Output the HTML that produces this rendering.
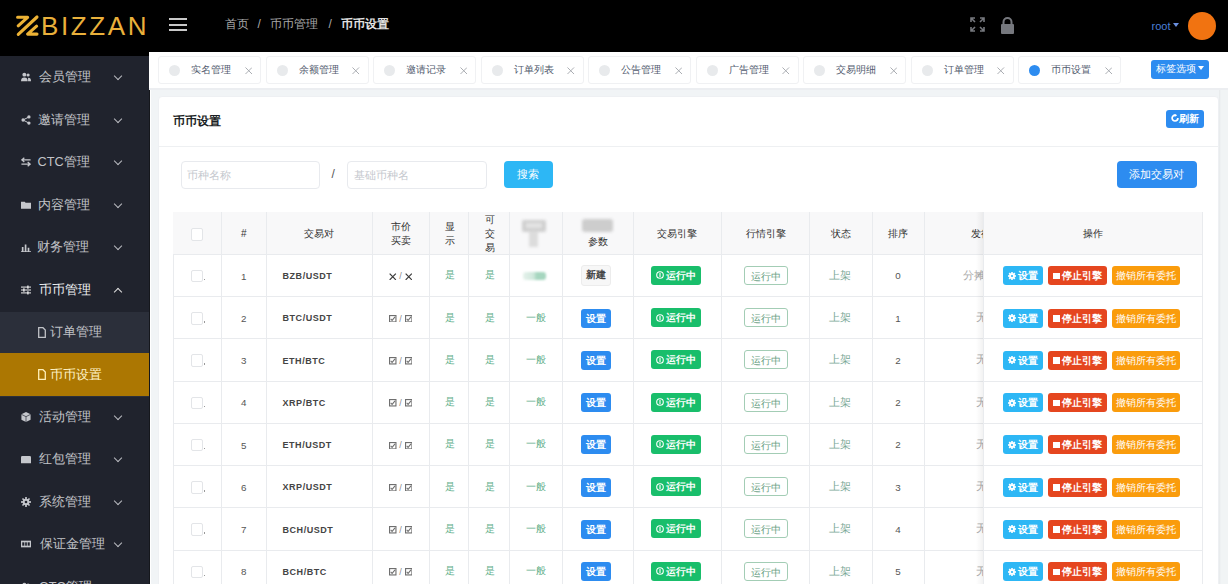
<!DOCTYPE html><html><head><meta charset="utf-8"><style>
*{margin:0;padding:0;box-sizing:border-box}
html,body{width:1228px;height:584px;overflow:hidden;background:#f1f4f6;font-family:"Liberation Sans",sans-serif;position:relative}
.abs{position:absolute}
#hdr{left:0;top:0;width:1228px;height:52px;background:#000}
#logoArea{left:0;top:0;width:150px;height:56px;background:#000}
#side{left:0;top:56px;width:150px;height:528px;background:#20232d}
#sideedge{left:149px;top:52px;width:1px;height:532px;background:#15171c}
#whiteedge{left:150px;top:52px;width:1.2px;height:532px;background:#fff}
.mi{position:absolute;left:0;width:150px;height:42.5px;color:#c5c6ca;font-size:12.7px;line-height:42.5px}
.mi .t{position:absolute;left:39px;top:0}
.mi .chev{position:absolute;left:114.5px;top:17px;width:6px;height:6px;border-right:1.3px solid #b9bbc0;border-bottom:1.3px solid #b9bbc0;transform:rotate(45deg)}
.mi .chev.up{top:20px;transform:rotate(-135deg)}
.mi .ic{position:absolute;left:21px;top:16px;width:10px;height:10px}
#sub{left:0;top:311.5px;width:150px;height:85px;background:#2b2f3a}
#act{left:0;top:353px;width:150px;height:42.5px;background:#ac7702}
#tabbar{left:149px;top:52px;width:1079px;height:36px;background:#fff}
#tabline{left:149px;top:88px;width:1079px;height:2px;background:#eceef1}
.tab{position:absolute;top:56px;height:28px;width:103px;background:#fff;border:1px solid #f0f1f3;border-radius:3px;font-size:10.2px;color:#515a6e;line-height:26px}
.tab .dot{position:absolute;left:10px;top:7.5px;width:11px;height:11px;border-radius:50%;background:#e8eaec}
.tab .dot.on{background:#2d8cf0}
.tab .tt{position:absolute;left:32px;top:0}
.tab .x{position:absolute;left:86px;top:0;color:#9aa0a6;font-size:11px}
#card{left:158px;top:96px;width:1061px;height:500px;background:#fff;border:1px solid #eef0f3;border-radius:4px}
#cardline{left:159px;top:145.5px;width:1059px;height:1px;background:#eef0f2}
.inp{position:absolute;height:28px;border:1px solid #e8eaee;border-radius:4px;background:#fff;font-size:10.5px;color:#c5c8ce;line-height:26px;padding-left:5.7px}
.btn{position:absolute;color:#fff;text-align:center;border-radius:3px}
table{border-collapse:collapse;table-layout:fixed}
.cell{position:absolute;border-right:1px solid #e9ebee;border-bottom:1px solid #e9ebee;text-align:center;color:#515a6e;font-size:10.5px;display:flex;align-items:center;justify-content:center}
.th{background:#f8f8f9;font-weight:500;color:#333;line-height:14px;font-size:10px;padding-top:2px}
.cb{width:12px;height:12.5px;border:1px solid #e3e5e8;border-radius:2px;background:#fff;margin-left:-1px;margin-top:1.5px}
.green{color:#5faf8a;font-size:10px}
.tag{display:inline-block;height:19px;line-height:19px;border-radius:3px;font-size:10.5px}
</style></head><body>
<div class="abs" id="hdr"></div><div class="abs" id="logoArea"></div>
<svg class="abs" style="left:12px;top:10px" width="32" height="32" viewBox="12 10 32 32">
<g fill="none" stroke="#ecb235" stroke-width="3.1" stroke-linecap="round" stroke-linejoin="round">
<path d="M17.6 17.3 H27.6 L18.2 25.8"/>
<path d="M37 17 L18.3 34.4"/>
<path d="M36.6 26.2 L27.6 34.1 H37"/>
</g></svg>
<div class="abs" style="left:41px;top:12px;font-size:26px;color:#e9b03b;letter-spacing:2.6px;line-height:28px">BIZZAN</div>
<div class="abs" style="left:168.5px;top:18px;width:18.5px;height:2px;background:#c9c9c9"></div>
<div class="abs" style="left:168.5px;top:23.5px;width:18.5px;height:2px;background:#c9c9c9"></div>
<div class="abs" style="left:168.5px;top:29px;width:18.5px;height:2px;background:#c9c9c9"></div>
<div class="abs" style="left:224.5px;top:16px;font-size:12px;color:#a9a9a9;line-height:16px;white-space:nowrap">首页</div>
<div class="abs" style="left:257.5px;top:16px;font-size:12px;color:#a9a9a9;line-height:16px">/</div>
<div class="abs" style="left:270px;top:16px;font-size:12px;color:#a9a9a9;line-height:16px;white-space:nowrap">币币管理</div>
<div class="abs" style="left:328.5px;top:16px;font-size:12px;color:#a9a9a9;line-height:16px">/</div>
<div class="abs" style="left:340.5px;top:16px;font-size:12px;color:#e3e3e3;font-weight:bold;line-height:16px;white-space:nowrap">币币设置</div>
<svg class="abs" style="left:970px;top:17px" width="15" height="15" viewBox="0 0 15 15" fill="none" stroke="#76787e" stroke-width="1.6">
<path d="M1 5V1H5M1 1L5 5M10 1H14V5M14 1L10 5M1 10V14H5M1 14L5 10M14 10V14H10M14 14L10 10"/></svg>
<svg class="abs" style="left:1000px;top:17px" width="15" height="17" viewBox="0 0 15 17">
<path d="M3.5 7V5A4 4 0 0 1 11.5 5V7" fill="none" stroke="#76787e" stroke-width="2"/>
<rect x="1" y="7" width="13" height="10" rx="1" fill="#76787e"/></svg>
<div class="abs" style="left:1151.5px;top:18px;font-size:11px;color:#4a7fd6;line-height:16px">root</div>
<div class="abs" style="left:1172.5px;top:23px;width:0;height:0;border-left:3.5px solid transparent;border-right:3.5px solid transparent;border-top:4px solid #6a8fe0"></div>
<div class="abs" style="left:1187.5px;top:11.5px;width:28.5px;height:28.5px;border-radius:50%;background:#f17311"></div>
<div class="abs" id="side"></div><div class="abs" id="sub"></div><div class="abs" id="act"></div>
<div class="mi" style="top:56px;color:#c2c3c8"><svg class="ic" viewBox="0 0 12 12"><circle cx="4" cy="3.2" r="2.3" fill="#c5c7cc"/><path d="M0 11C0 7.5 1.5 6.5 4 6.5S8 7.5 8 11Z" fill="#c5c7cc"/><circle cx="8.5" cy="3.6" r="1.9" fill="#c5c7cc"/><path d="M8.5 11H12C12 8 11 7 8.5 7Z" fill="#c5c7cc"/></svg><span class="t" style="left:39px">会员管理</span><span class="chev"></span></div>
<div class="mi" style="top:98.5px;color:#c2c3c8"><svg class="ic" viewBox="0 0 12 12"><circle cx="9.5" cy="2.3" r="2" fill="#c5c7cc"/><circle cx="2.5" cy="6" r="2" fill="#c5c7cc"/><circle cx="9.5" cy="9.7" r="2" fill="#c5c7cc"/><path d="M9.5 2.3L2.5 6L9.5 9.7" stroke="#c5c7cc" stroke-width="1.2" fill="none"/></svg><span class="t" style="left:37.5px">邀请管理</span><span class="chev"></span></div>
<div class="mi" style="top:141px;color:#c2c3c8"><svg class="ic" viewBox="0 0 12 12"><path d="M1 3.5H11.5M4 1L1 3.5L4 6M0.5 8.5H11M8 6L11 8.5L8 11" stroke="#c5c7cc" stroke-width="1.5" fill="none"/></svg><span class="t" style="left:37.5px">CTC管理</span><span class="chev"></span></div>
<div class="mi" style="top:183.5px;color:#c2c3c8"><svg class="ic" viewBox="0 0 12 12"><path d="M0 2H4.5L5.5 3.3H12V10.5H0Z" fill="#c5c7cc"/></svg><span class="t" style="left:37.5px">内容管理</span><span class="chev"></span></div>
<div class="mi" style="top:226px;color:#c2c3c8"><svg class="ic" viewBox="0 0 12 12"><path d="M0 11H12V12H0ZM1 6H3V11H1ZM4.5 3H6.5V11H4.5ZM8 7H10V11H8Z" fill="#c5c7cc"/></svg><span class="t" style="left:36.5px">财务管理</span><span class="chev"></span></div>
<div class="mi" style="top:268.5px;color:#eeeff1"><svg class="ic" viewBox="0 0 12 12"><path d="M0 2.5H12M0 6H12M0 9.5H12" stroke="#f0f0f0" stroke-width="1.2" fill="none"/><path d="M7.6 0.5H9V4.5H7.6ZM2.8 4H4.2V8H2.8ZM7.6 7.5H9V11.5H7.6Z" fill="#fff"/></svg><span class="t" style="left:39px">币币管理</span><span class="chev up" style="border-color:#e0e0e0"></span></div>
<div class="mi" style="top:395.5px;color:#c2c3c8"><svg class="ic" viewBox="0 0 12 12"><path d="M6 0L11.5 2.8V9.2L6 12L0.5 9.2V2.8Z" fill="#c5c7cc"/><path d="M0.5 2.8L6 5.6L11.5 2.8M6 5.6V12" stroke="#20232d" stroke-width="0.8" fill="none"/></svg><span class="t" style="left:39px">活动管理</span><span class="chev"></span></div>
<div class="mi" style="top:438px;color:#c2c3c8"><svg class="ic" viewBox="0 0 12 12"><path d="M1.5 2.5H10.5Q12 2.5 12 4V11H0V4Q0 2.5 1.5 2.5Z" fill="#c5c7cc"/></svg><span class="t" style="left:39px">红包管理</span><span class="chev"></span></div>
<div class="mi" style="top:480.5px;color:#c2c3c8"><svg class="ic" viewBox="0 0 12 12"><g fill="#c5c7cc"><circle cx="6" cy="6" r="4"/><rect x="5" y="0" width="2" height="12"/><rect x="0" y="5" width="12" height="2"/><rect x="5" y="0" width="2" height="12" transform="rotate(45 6 6)"/><rect x="5" y="0" width="2" height="12" transform="rotate(-45 6 6)"/></g><circle cx="6" cy="6" r="1.6" fill="#20232d"/></svg><span class="t" style="left:39px">系统管理</span><span class="chev"></span></div>
<div class="mi" style="top:523px;color:#c2c3c8"><svg class="ic" viewBox="0 0 12 12"><rect x="0" y="2" width="12" height="8" fill="#c5c7cc"/><rect x="1.5" y="4" width="2.5" height="4" fill="#20232d"/><rect x="5" y="4" width="2" height="4" fill="#20232d"/><rect x="8" y="4" width="2.5" height="4" fill="#20232d"/></svg><span class="t" style="left:40px">保证金管理</span><span class="chev"></span></div>
<div class="mi" style="top:565.5px;color:#c2c3c8"><svg class="ic" viewBox="0 0 12 12"><circle cx="4" cy="3.2" r="2.3" fill="#c5c7cc"/><path d="M0 11C0 7.5 1.5 6.5 4 6.5S8 7.5 8 11Z" fill="#c5c7cc"/><circle cx="8.5" cy="3.6" r="1.9" fill="#c5c7cc"/><path d="M8.5 11H12C12 8 11 7 8.5 7Z" fill="#c5c7cc"/></svg><span class="t" style="left:39px">OTC管理</span><span class="chev"></span></div>
<div class="mi" style="top:311px;color:#c0c2c7"><svg class="abs" style="left:37.5px;top:15.5px" width="8" height="11" viewBox="0 0 8 11"><path d="M0.7 0.7H5L7.3 3V10.3H0.7Z" fill="none" stroke="#c0c2c7" stroke-width="1.3"/></svg><span class="t" style="left:50px">订单管理</span></div>
<div class="mi" style="top:353.5px;color:#fff3c8"><svg class="abs" style="left:37.5px;top:15.5px" width="8" height="11" viewBox="0 0 8 11"><path d="M0.7 0.7H5L7.3 3V10.3H0.7Z" fill="none" stroke="#fff0b8" stroke-width="1.3"/></svg><span class="t" style="left:50px">币币设置</span></div>
<div class="abs" id="sideedge"></div><div class="abs" id="whiteedge"></div>
<div class="abs" id="tabbar"></div><div class="abs" id="tabline"></div>
<div class="tab" style="left:158.4px"><span class="dot"></span><span class="tt">实名管理</span><svg class="x" style="left:85.5px;top:10px" width="7.5" height="7.5" viewBox="0 0 8 8"><path d="M0.5 0.5L7.5 7.5M7.5 0.5L0.5 7.5" stroke="#a5a9ae" stroke-width="1"/></svg></div>
<div class="tab" style="left:265.9px"><span class="dot"></span><span class="tt">余额管理</span><svg class="x" style="left:85.5px;top:10px" width="7.5" height="7.5" viewBox="0 0 8 8"><path d="M0.5 0.5L7.5 7.5M7.5 0.5L0.5 7.5" stroke="#a5a9ae" stroke-width="1"/></svg></div>
<div class="tab" style="left:373.3px"><span class="dot"></span><span class="tt">邀请记录</span><svg class="x" style="left:85.5px;top:10px" width="7.5" height="7.5" viewBox="0 0 8 8"><path d="M0.5 0.5L7.5 7.5M7.5 0.5L0.5 7.5" stroke="#a5a9ae" stroke-width="1"/></svg></div>
<div class="tab" style="left:480.8px"><span class="dot"></span><span class="tt">订单列表</span><svg class="x" style="left:85.5px;top:10px" width="7.5" height="7.5" viewBox="0 0 8 8"><path d="M0.5 0.5L7.5 7.5M7.5 0.5L0.5 7.5" stroke="#a5a9ae" stroke-width="1"/></svg></div>
<div class="tab" style="left:588.2px"><span class="dot"></span><span class="tt">公告管理</span><svg class="x" style="left:85.5px;top:10px" width="7.5" height="7.5" viewBox="0 0 8 8"><path d="M0.5 0.5L7.5 7.5M7.5 0.5L0.5 7.5" stroke="#a5a9ae" stroke-width="1"/></svg></div>
<div class="tab" style="left:695.6px"><span class="dot"></span><span class="tt">广告管理</span><svg class="x" style="left:85.5px;top:10px" width="7.5" height="7.5" viewBox="0 0 8 8"><path d="M0.5 0.5L7.5 7.5M7.5 0.5L0.5 7.5" stroke="#a5a9ae" stroke-width="1"/></svg></div>
<div class="tab" style="left:803.1px"><span class="dot"></span><span class="tt">交易明细</span><svg class="x" style="left:85.5px;top:10px" width="7.5" height="7.5" viewBox="0 0 8 8"><path d="M0.5 0.5L7.5 7.5M7.5 0.5L0.5 7.5" stroke="#a5a9ae" stroke-width="1"/></svg></div>
<div class="tab" style="left:910.5px"><span class="dot"></span><span class="tt">订单管理</span><svg class="x" style="left:85.5px;top:10px" width="7.5" height="7.5" viewBox="0 0 8 8"><path d="M0.5 0.5L7.5 7.5M7.5 0.5L0.5 7.5" stroke="#a5a9ae" stroke-width="1"/></svg></div>
<div class="tab" style="left:1018.0px"><span class="dot on"></span><span class="tt">币币设置</span><svg class="x" style="left:85.5px;top:10px" width="7.5" height="7.5" viewBox="0 0 8 8"><path d="M0.5 0.5L7.5 7.5M7.5 0.5L0.5 7.5" stroke="#a5a9ae" stroke-width="1"/></svg></div>
<div class="btn" style="left:1151px;top:60px;width:58px;height:18.5px;background:#2d8cf0;font-size:9.6px;line-height:18.5px;border-radius:3px">标签选项<span style="display:inline-block;margin-left:2px;vertical-align:2px;border-left:3px solid transparent;border-right:3px solid transparent;border-top:4px solid #fff"></span></div>
<div class="abs" id="card"></div><div class="abs" id="cardline"></div>
<div class="abs" style="left:173.3px;top:112.5px;font-size:12.1px;font-weight:bold;color:#1c1f26;line-height:17px">币币设置</div>
<div class="btn" style="left:1166px;top:109.5px;width:38px;height:18.5px;background:#2d8cf0;font-size:9.8px;line-height:18.5px;font-weight:bold"><svg width="8" height="8" viewBox="0 0 8 8" style="display:inline-block;vertical-align:-0.5px;margin-right:0.5px"><path d="M4 1.2A2.9 2.9 0 1 0 6.9 4.1" fill="none" stroke="#fff" stroke-width="1.7"/><path d="M3.6 -0.4L6.2 1.3L3.6 3Z" fill="#fff"/></svg>刷新</div>
<div class="inp" style="left:180.5px;top:160.5px;width:139px">币种名称</div>
<div class="abs" style="left:331.5px;top:166px;font-size:12px;color:#555;line-height:16px">/</div>
<div class="inp" style="left:347px;top:160.5px;width:139.5px">基础币种名</div>
<div class="btn" style="left:503.5px;top:160.5px;width:49px;height:27.5px;background:#2db7f5;font-size:11px;line-height:27.5px;border-radius:4px">搜索</div>
<div class="btn" style="left:1116.5px;top:161px;width:80.5px;height:26.5px;background:#2d8cf0;font-size:10.6px;line-height:26.5px;border-radius:4px">添加交易对</div>
<div class="abs" style="left:173.2px;top:211.8px;width:1030.0px;height:1px;background:#e9ebee"></div>
<div class="abs" style="left:173.2px;top:211.8px;width:1px;height:372.2px;background:#e9ebee"></div>
<div class="cell th" style="left:173.2px;top:211.8px;width:48.80000000000001px;height:43px;"><span class="cb"></span></div>
<div class="cell th" style="left:222px;top:211.8px;width:44.5px;height:43px;">#</div>
<div class="cell th" style="left:266.5px;top:211.8px;width:106.0px;height:43px;">交易对</div>
<div class="cell th" style="left:372.5px;top:211.8px;width:57.0px;height:43px;line-height:13.6px;">市价<br>买卖</div>
<div class="cell th" style="left:429.5px;top:211.8px;width:39.5px;height:43px;line-height:13.6px;padding-left:3px;">显<br>示</div>
<div class="cell th" style="left:469px;top:211.8px;width:40.5px;height:43px;line-height:13.8px;padding-left:3px;">可<br>交<br>易</div>
<div class="cell th" style="left:509.5px;top:211.8px;width:53.0px;height:43px;"><span style="display:inline-block;position:relative;width:26px;height:30px;filter:blur(1.8px);margin-top:2px;margin-left:-4px"><span style="position:absolute;left:1px;top:0;width:24px;height:12px;background:#cfcfcf;border-radius:2px"></span><span style="position:absolute;left:5px;top:3px;width:16px;height:5px;background:#e3e3e3"></span><span style="position:absolute;left:8px;top:11px;width:9px;height:16px;background:#dcdcdc"></span></span></div>
<div class="cell th" style="left:562.5px;top:211.8px;width:71.0px;height:43px;"><span style="display:block"><span style="display:block;width:31px;height:13px;margin:0 auto 3px;background:#cdcdcd;border-radius:3px;filter:blur(1.8px)"></span>参数</span></div>
<div class="cell th" style="left:633.5px;top:211.8px;width:88.5px;height:43px;">交易引擎</div>
<div class="cell th" style="left:722px;top:211.8px;width:88px;height:43px;">行情引擎</div>
<div class="cell th" style="left:810px;top:211.8px;width:62.5px;height:43px;">状态</div>
<div class="cell th" style="left:872.5px;top:211.8px;width:52.200000000000045px;height:43px;">排序</div>
<div class="cell th" style="left:924.7px;top:211.8px;width:114.59999999999991px;height:43px;">发行</div>
<div class="cell" style="left:173.2px;top:254.8px;width:48.80000000000001px;height:42.25px;"><span class="cb"></span><span style="position:absolute;left:30.5px;top:24px;width:1.5px;height:1.5px;background:#999"></span></div>
<div class="cell" style="left:222px;top:254.8px;width:44.5px;height:42.25px;"><span style="color:#555;font-size:9.8px;margin-top:1.5px">1</span></div>
<div class="cell" style="left:266.5px;top:254.8px;width:106.0px;height:42.25px;justify-content:flex-start;padding-left:16px;"><b style="font-size:9px;letter-spacing:0.55px;color:#444;margin-top:1.5px">BZB/USDT</b></div>
<div class="cell" style="left:372.5px;top:254.8px;width:57.0px;height:42.25px;"><span style="margin-top:2px;display:flex;align-items:center"><svg width="7.5" height="7.5" viewBox="0 0 8 8" style="display:inline-block"><path d="M0.7 0.7L7.3 7.3M7.3 0.7L0.7 7.3" stroke="#3a3a3a" stroke-width="1.3"/></svg><span style="display:inline-block;width:8px;text-align:center;font-size:9px;color:#888">/</span><svg width="7.5" height="7.5" viewBox="0 0 8 8" style="display:inline-block"><path d="M0.7 0.7L7.3 7.3M7.3 0.7L0.7 7.3" stroke="#3a3a3a" stroke-width="1.3"/></svg></span></div>
<div class="cell" style="left:429.5px;top:254.8px;width:39.5px;height:42.25px;"><span class="green" style="margin-left:3px">是</span></div>
<div class="cell" style="left:469px;top:254.8px;width:40.5px;height:42.25px;"><span class="green" style="margin-left:3px">是</span></div>
<div class="cell" style="left:509.5px;top:254.8px;width:53.0px;height:42.25px;"><span style="display:inline-block;width:23px;height:8.5px;background:linear-gradient(to right,#e6f2ec,#cfe8dc 45%,#a6d6bf 60%,#a6d6bf);border-radius:3px;filter:blur(1.1px);margin-left:-3px;margin-top:1px"></span></div>
<div class="cell" style="left:562.5px;top:254.8px;width:71.0px;height:42.25px;"><span class="tag" style="background:#f7f7f7;border:1px solid #ececec;color:#444;width:30px;height:20.5px;line-height:18.5px;margin-left:-4px;font-weight:bold;font-size:10px">新建</span></div>
<div class="cell" style="left:633.5px;top:254.8px;width:88.5px;height:42.25px;"><span class="tag" style="background:#19be6b;color:#fff;width:50px;margin-left:-3px;font-weight:bold;font-size:9.8px"><svg width="8" height="8" viewBox="0 0 8 8" style="display:inline-block;vertical-align:-0.5px;margin-right:1.5px"><circle cx="4" cy="4" r="3.3" fill="none" stroke="#fff" stroke-width="1.1"/><rect x="3.45" y="2" width="1.1" height="4" fill="#fff"/></svg>运行中</span></div>
<div class="cell" style="left:722px;top:254.8px;width:88px;height:42.25px;"><span class="tag" style="border:1px solid #a3cdb5;color:#6b9f84;width:44.5px;margin-left:1px;font-size:10px">运行中</span></div>
<div class="cell" style="left:810px;top:254.8px;width:62.5px;height:42.25px;"><span style="color:#79a896;margin-left:-1px;margin-top:1px">上架</span></div>
<div class="cell" style="left:872.5px;top:254.8px;width:52.200000000000045px;height:42.25px;"><span style="color:#555;font-size:9.8px;margin-top:1px">0</span></div>
<div class="cell" style="left:924.7px;top:254.8px;width:114.59999999999991px;height:42.25px;"><span style="color:#aaa;position:absolute;top:14px;left:38.8px">分摊(平台)</span></div>
<div class="cell" style="left:173.2px;top:297.05px;width:48.80000000000001px;height:42.25px;"><span class="cb"></span><span style="position:absolute;left:30.5px;top:24px;width:1.5px;height:1.5px;background:#999"></span></div>
<div class="cell" style="left:222px;top:297.05px;width:44.5px;height:42.25px;"><span style="color:#555;font-size:9.8px;margin-top:1.5px">2</span></div>
<div class="cell" style="left:266.5px;top:297.05px;width:106.0px;height:42.25px;justify-content:flex-start;padding-left:16px;"><b style="font-size:9px;letter-spacing:0.55px;color:#444;margin-top:1.5px">BTC/USDT</b></div>
<div class="cell" style="left:372.5px;top:297.05px;width:57.0px;height:42.25px;"><span style="margin-top:2px;display:flex;align-items:center"><svg width="7.5" height="7.5" viewBox="0 0 8 8" style="display:inline-block"><rect x="0.6" y="0.6" width="6.8" height="6.8" fill="none" stroke="#6f6f6f" stroke-width="1.2"/><path d="M1.8 4.2L3.3 5.8L6.4 2" fill="none" stroke="#6f6f6f" stroke-width="1.1"/></svg><span style="display:inline-block;width:8px;text-align:center;font-size:9px;color:#888">/</span><svg width="7.5" height="7.5" viewBox="0 0 8 8" style="display:inline-block"><rect x="0.6" y="0.6" width="6.8" height="6.8" fill="none" stroke="#6f6f6f" stroke-width="1.2"/><path d="M1.8 4.2L3.3 5.8L6.4 2" fill="none" stroke="#6f6f6f" stroke-width="1.1"/></svg></span></div>
<div class="cell" style="left:429.5px;top:297.05px;width:39.5px;height:42.25px;"><span class="green" style="margin-left:3px">是</span></div>
<div class="cell" style="left:469px;top:297.05px;width:40.5px;height:42.25px;"><span class="green" style="margin-left:3px">是</span></div>
<div class="cell" style="left:509.5px;top:297.05px;width:53.0px;height:42.25px;"><span class="green">一般</span></div>
<div class="cell" style="left:562.5px;top:297.05px;width:71.0px;height:42.25px;"><span class="tag" style="background:#2d8cf0;color:#fff;width:30px;margin-left:-3.5px;margin-top:1px;font-weight:bold;font-size:9.8px">设置</span></div>
<div class="cell" style="left:633.5px;top:297.05px;width:88.5px;height:42.25px;"><span class="tag" style="background:#19be6b;color:#fff;width:50px;margin-left:-3px;font-weight:bold;font-size:9.8px"><svg width="8" height="8" viewBox="0 0 8 8" style="display:inline-block;vertical-align:-0.5px;margin-right:1.5px"><circle cx="4" cy="4" r="3.3" fill="none" stroke="#fff" stroke-width="1.1"/><rect x="3.45" y="2" width="1.1" height="4" fill="#fff"/></svg>运行中</span></div>
<div class="cell" style="left:722px;top:297.05px;width:88px;height:42.25px;"><span class="tag" style="border:1px solid #a3cdb5;color:#6b9f84;width:44.5px;margin-left:1px;font-size:10px">运行中</span></div>
<div class="cell" style="left:810px;top:297.05px;width:62.5px;height:42.25px;"><span style="color:#79a896;margin-left:-1px;margin-top:1px">上架</span></div>
<div class="cell" style="left:872.5px;top:297.05px;width:52.200000000000045px;height:42.25px;"><span style="color:#555;font-size:9.8px;margin-top:1px">1</span></div>
<div class="cell" style="left:924.7px;top:297.05px;width:114.59999999999991px;height:42.25px;"><span style="color:#aaa;position:absolute;top:14px;left:51.5px">无</span></div>
<div class="cell" style="left:173.2px;top:339.3px;width:48.80000000000001px;height:42.25px;"><span class="cb"></span><span style="position:absolute;left:30.5px;top:24px;width:1.5px;height:1.5px;background:#999"></span></div>
<div class="cell" style="left:222px;top:339.3px;width:44.5px;height:42.25px;"><span style="color:#555;font-size:9.8px;margin-top:1.5px">3</span></div>
<div class="cell" style="left:266.5px;top:339.3px;width:106.0px;height:42.25px;justify-content:flex-start;padding-left:16px;"><b style="font-size:9px;letter-spacing:0.55px;color:#444;margin-top:1.5px">ETH/BTC</b></div>
<div class="cell" style="left:372.5px;top:339.3px;width:57.0px;height:42.25px;"><span style="margin-top:2px;display:flex;align-items:center"><svg width="7.5" height="7.5" viewBox="0 0 8 8" style="display:inline-block"><rect x="0.6" y="0.6" width="6.8" height="6.8" fill="none" stroke="#6f6f6f" stroke-width="1.2"/><path d="M1.8 4.2L3.3 5.8L6.4 2" fill="none" stroke="#6f6f6f" stroke-width="1.1"/></svg><span style="display:inline-block;width:8px;text-align:center;font-size:9px;color:#888">/</span><svg width="7.5" height="7.5" viewBox="0 0 8 8" style="display:inline-block"><rect x="0.6" y="0.6" width="6.8" height="6.8" fill="none" stroke="#6f6f6f" stroke-width="1.2"/><path d="M1.8 4.2L3.3 5.8L6.4 2" fill="none" stroke="#6f6f6f" stroke-width="1.1"/></svg></span></div>
<div class="cell" style="left:429.5px;top:339.3px;width:39.5px;height:42.25px;"><span class="green" style="margin-left:3px">是</span></div>
<div class="cell" style="left:469px;top:339.3px;width:40.5px;height:42.25px;"><span class="green" style="margin-left:3px">是</span></div>
<div class="cell" style="left:509.5px;top:339.3px;width:53.0px;height:42.25px;"><span class="green">一般</span></div>
<div class="cell" style="left:562.5px;top:339.3px;width:71.0px;height:42.25px;"><span class="tag" style="background:#2d8cf0;color:#fff;width:30px;margin-left:-3.5px;margin-top:1px;font-weight:bold;font-size:9.8px">设置</span></div>
<div class="cell" style="left:633.5px;top:339.3px;width:88.5px;height:42.25px;"><span class="tag" style="background:#19be6b;color:#fff;width:50px;margin-left:-3px;font-weight:bold;font-size:9.8px"><svg width="8" height="8" viewBox="0 0 8 8" style="display:inline-block;vertical-align:-0.5px;margin-right:1.5px"><circle cx="4" cy="4" r="3.3" fill="none" stroke="#fff" stroke-width="1.1"/><rect x="3.45" y="2" width="1.1" height="4" fill="#fff"/></svg>运行中</span></div>
<div class="cell" style="left:722px;top:339.3px;width:88px;height:42.25px;"><span class="tag" style="border:1px solid #a3cdb5;color:#6b9f84;width:44.5px;margin-left:1px;font-size:10px">运行中</span></div>
<div class="cell" style="left:810px;top:339.3px;width:62.5px;height:42.25px;"><span style="color:#79a896;margin-left:-1px;margin-top:1px">上架</span></div>
<div class="cell" style="left:872.5px;top:339.3px;width:52.200000000000045px;height:42.25px;"><span style="color:#555;font-size:9.8px;margin-top:1px">2</span></div>
<div class="cell" style="left:924.7px;top:339.3px;width:114.59999999999991px;height:42.25px;"><span style="color:#aaa;position:absolute;top:14px;left:51.5px">无</span></div>
<div class="cell" style="left:173.2px;top:381.55px;width:48.80000000000001px;height:42.25px;"><span class="cb"></span><span style="position:absolute;left:30.5px;top:24px;width:1.5px;height:1.5px;background:#999"></span></div>
<div class="cell" style="left:222px;top:381.55px;width:44.5px;height:42.25px;"><span style="color:#555;font-size:9.8px;margin-top:1.5px">4</span></div>
<div class="cell" style="left:266.5px;top:381.55px;width:106.0px;height:42.25px;justify-content:flex-start;padding-left:16px;"><b style="font-size:9px;letter-spacing:0.55px;color:#444;margin-top:1.5px">XRP/BTC</b></div>
<div class="cell" style="left:372.5px;top:381.55px;width:57.0px;height:42.25px;"><span style="margin-top:2px;display:flex;align-items:center"><svg width="7.5" height="7.5" viewBox="0 0 8 8" style="display:inline-block"><rect x="0.6" y="0.6" width="6.8" height="6.8" fill="none" stroke="#6f6f6f" stroke-width="1.2"/><path d="M1.8 4.2L3.3 5.8L6.4 2" fill="none" stroke="#6f6f6f" stroke-width="1.1"/></svg><span style="display:inline-block;width:8px;text-align:center;font-size:9px;color:#888">/</span><svg width="7.5" height="7.5" viewBox="0 0 8 8" style="display:inline-block"><rect x="0.6" y="0.6" width="6.8" height="6.8" fill="none" stroke="#6f6f6f" stroke-width="1.2"/><path d="M1.8 4.2L3.3 5.8L6.4 2" fill="none" stroke="#6f6f6f" stroke-width="1.1"/></svg></span></div>
<div class="cell" style="left:429.5px;top:381.55px;width:39.5px;height:42.25px;"><span class="green" style="margin-left:3px">是</span></div>
<div class="cell" style="left:469px;top:381.55px;width:40.5px;height:42.25px;"><span class="green" style="margin-left:3px">是</span></div>
<div class="cell" style="left:509.5px;top:381.55px;width:53.0px;height:42.25px;"><span class="green">一般</span></div>
<div class="cell" style="left:562.5px;top:381.55px;width:71.0px;height:42.25px;"><span class="tag" style="background:#2d8cf0;color:#fff;width:30px;margin-left:-3.5px;margin-top:1px;font-weight:bold;font-size:9.8px">设置</span></div>
<div class="cell" style="left:633.5px;top:381.55px;width:88.5px;height:42.25px;"><span class="tag" style="background:#19be6b;color:#fff;width:50px;margin-left:-3px;font-weight:bold;font-size:9.8px"><svg width="8" height="8" viewBox="0 0 8 8" style="display:inline-block;vertical-align:-0.5px;margin-right:1.5px"><circle cx="4" cy="4" r="3.3" fill="none" stroke="#fff" stroke-width="1.1"/><rect x="3.45" y="2" width="1.1" height="4" fill="#fff"/></svg>运行中</span></div>
<div class="cell" style="left:722px;top:381.55px;width:88px;height:42.25px;"><span class="tag" style="border:1px solid #a3cdb5;color:#6b9f84;width:44.5px;margin-left:1px;font-size:10px">运行中</span></div>
<div class="cell" style="left:810px;top:381.55px;width:62.5px;height:42.25px;"><span style="color:#79a896;margin-left:-1px;margin-top:1px">上架</span></div>
<div class="cell" style="left:872.5px;top:381.55px;width:52.200000000000045px;height:42.25px;"><span style="color:#555;font-size:9.8px;margin-top:1px">2</span></div>
<div class="cell" style="left:924.7px;top:381.55px;width:114.59999999999991px;height:42.25px;"><span style="color:#aaa;position:absolute;top:14px;left:51.5px">无</span></div>
<div class="cell" style="left:173.2px;top:423.8px;width:48.80000000000001px;height:42.25px;"><span class="cb"></span><span style="position:absolute;left:30.5px;top:24px;width:1.5px;height:1.5px;background:#999"></span></div>
<div class="cell" style="left:222px;top:423.8px;width:44.5px;height:42.25px;"><span style="color:#555;font-size:9.8px;margin-top:1.5px">5</span></div>
<div class="cell" style="left:266.5px;top:423.8px;width:106.0px;height:42.25px;justify-content:flex-start;padding-left:16px;"><b style="font-size:9px;letter-spacing:0.55px;color:#444;margin-top:1.5px">ETH/USDT</b></div>
<div class="cell" style="left:372.5px;top:423.8px;width:57.0px;height:42.25px;"><span style="margin-top:2px;display:flex;align-items:center"><svg width="7.5" height="7.5" viewBox="0 0 8 8" style="display:inline-block"><rect x="0.6" y="0.6" width="6.8" height="6.8" fill="none" stroke="#6f6f6f" stroke-width="1.2"/><path d="M1.8 4.2L3.3 5.8L6.4 2" fill="none" stroke="#6f6f6f" stroke-width="1.1"/></svg><span style="display:inline-block;width:8px;text-align:center;font-size:9px;color:#888">/</span><svg width="7.5" height="7.5" viewBox="0 0 8 8" style="display:inline-block"><rect x="0.6" y="0.6" width="6.8" height="6.8" fill="none" stroke="#6f6f6f" stroke-width="1.2"/><path d="M1.8 4.2L3.3 5.8L6.4 2" fill="none" stroke="#6f6f6f" stroke-width="1.1"/></svg></span></div>
<div class="cell" style="left:429.5px;top:423.8px;width:39.5px;height:42.25px;"><span class="green" style="margin-left:3px">是</span></div>
<div class="cell" style="left:469px;top:423.8px;width:40.5px;height:42.25px;"><span class="green" style="margin-left:3px">是</span></div>
<div class="cell" style="left:509.5px;top:423.8px;width:53.0px;height:42.25px;"><span class="green">一般</span></div>
<div class="cell" style="left:562.5px;top:423.8px;width:71.0px;height:42.25px;"><span class="tag" style="background:#2d8cf0;color:#fff;width:30px;margin-left:-3.5px;margin-top:1px;font-weight:bold;font-size:9.8px">设置</span></div>
<div class="cell" style="left:633.5px;top:423.8px;width:88.5px;height:42.25px;"><span class="tag" style="background:#19be6b;color:#fff;width:50px;margin-left:-3px;font-weight:bold;font-size:9.8px"><svg width="8" height="8" viewBox="0 0 8 8" style="display:inline-block;vertical-align:-0.5px;margin-right:1.5px"><circle cx="4" cy="4" r="3.3" fill="none" stroke="#fff" stroke-width="1.1"/><rect x="3.45" y="2" width="1.1" height="4" fill="#fff"/></svg>运行中</span></div>
<div class="cell" style="left:722px;top:423.8px;width:88px;height:42.25px;"><span class="tag" style="border:1px solid #a3cdb5;color:#6b9f84;width:44.5px;margin-left:1px;font-size:10px">运行中</span></div>
<div class="cell" style="left:810px;top:423.8px;width:62.5px;height:42.25px;"><span style="color:#79a896;margin-left:-1px;margin-top:1px">上架</span></div>
<div class="cell" style="left:872.5px;top:423.8px;width:52.200000000000045px;height:42.25px;"><span style="color:#555;font-size:9.8px;margin-top:1px">2</span></div>
<div class="cell" style="left:924.7px;top:423.8px;width:114.59999999999991px;height:42.25px;"><span style="color:#aaa;position:absolute;top:14px;left:51.5px">无</span></div>
<div class="cell" style="left:173.2px;top:466.05px;width:48.80000000000001px;height:42.25px;"><span class="cb"></span><span style="position:absolute;left:30.5px;top:24px;width:1.5px;height:1.5px;background:#999"></span></div>
<div class="cell" style="left:222px;top:466.05px;width:44.5px;height:42.25px;"><span style="color:#555;font-size:9.8px;margin-top:1.5px">6</span></div>
<div class="cell" style="left:266.5px;top:466.05px;width:106.0px;height:42.25px;justify-content:flex-start;padding-left:16px;"><b style="font-size:9px;letter-spacing:0.55px;color:#444;margin-top:1.5px">XRP/USDT</b></div>
<div class="cell" style="left:372.5px;top:466.05px;width:57.0px;height:42.25px;"><span style="margin-top:2px;display:flex;align-items:center"><svg width="7.5" height="7.5" viewBox="0 0 8 8" style="display:inline-block"><rect x="0.6" y="0.6" width="6.8" height="6.8" fill="none" stroke="#6f6f6f" stroke-width="1.2"/><path d="M1.8 4.2L3.3 5.8L6.4 2" fill="none" stroke="#6f6f6f" stroke-width="1.1"/></svg><span style="display:inline-block;width:8px;text-align:center;font-size:9px;color:#888">/</span><svg width="7.5" height="7.5" viewBox="0 0 8 8" style="display:inline-block"><rect x="0.6" y="0.6" width="6.8" height="6.8" fill="none" stroke="#6f6f6f" stroke-width="1.2"/><path d="M1.8 4.2L3.3 5.8L6.4 2" fill="none" stroke="#6f6f6f" stroke-width="1.1"/></svg></span></div>
<div class="cell" style="left:429.5px;top:466.05px;width:39.5px;height:42.25px;"><span class="green" style="margin-left:3px">是</span></div>
<div class="cell" style="left:469px;top:466.05px;width:40.5px;height:42.25px;"><span class="green" style="margin-left:3px">是</span></div>
<div class="cell" style="left:509.5px;top:466.05px;width:53.0px;height:42.25px;"><span class="green">一般</span></div>
<div class="cell" style="left:562.5px;top:466.05px;width:71.0px;height:42.25px;"><span class="tag" style="background:#2d8cf0;color:#fff;width:30px;margin-left:-3.5px;margin-top:1px;font-weight:bold;font-size:9.8px">设置</span></div>
<div class="cell" style="left:633.5px;top:466.05px;width:88.5px;height:42.25px;"><span class="tag" style="background:#19be6b;color:#fff;width:50px;margin-left:-3px;font-weight:bold;font-size:9.8px"><svg width="8" height="8" viewBox="0 0 8 8" style="display:inline-block;vertical-align:-0.5px;margin-right:1.5px"><circle cx="4" cy="4" r="3.3" fill="none" stroke="#fff" stroke-width="1.1"/><rect x="3.45" y="2" width="1.1" height="4" fill="#fff"/></svg>运行中</span></div>
<div class="cell" style="left:722px;top:466.05px;width:88px;height:42.25px;"><span class="tag" style="border:1px solid #a3cdb5;color:#6b9f84;width:44.5px;margin-left:1px;font-size:10px">运行中</span></div>
<div class="cell" style="left:810px;top:466.05px;width:62.5px;height:42.25px;"><span style="color:#79a896;margin-left:-1px;margin-top:1px">上架</span></div>
<div class="cell" style="left:872.5px;top:466.05px;width:52.200000000000045px;height:42.25px;"><span style="color:#555;font-size:9.8px;margin-top:1px">3</span></div>
<div class="cell" style="left:924.7px;top:466.05px;width:114.59999999999991px;height:42.25px;"><span style="color:#aaa;position:absolute;top:14px;left:51.5px">无</span></div>
<div class="cell" style="left:173.2px;top:508.3px;width:48.80000000000001px;height:42.25px;"><span class="cb"></span><span style="position:absolute;left:30.5px;top:24px;width:1.5px;height:1.5px;background:#999"></span></div>
<div class="cell" style="left:222px;top:508.3px;width:44.5px;height:42.25px;"><span style="color:#555;font-size:9.8px;margin-top:1.5px">7</span></div>
<div class="cell" style="left:266.5px;top:508.3px;width:106.0px;height:42.25px;justify-content:flex-start;padding-left:16px;"><b style="font-size:9px;letter-spacing:0.55px;color:#444;margin-top:1.5px">BCH/USDT</b></div>
<div class="cell" style="left:372.5px;top:508.3px;width:57.0px;height:42.25px;"><span style="margin-top:2px;display:flex;align-items:center"><svg width="7.5" height="7.5" viewBox="0 0 8 8" style="display:inline-block"><rect x="0.6" y="0.6" width="6.8" height="6.8" fill="none" stroke="#6f6f6f" stroke-width="1.2"/><path d="M1.8 4.2L3.3 5.8L6.4 2" fill="none" stroke="#6f6f6f" stroke-width="1.1"/></svg><span style="display:inline-block;width:8px;text-align:center;font-size:9px;color:#888">/</span><svg width="7.5" height="7.5" viewBox="0 0 8 8" style="display:inline-block"><rect x="0.6" y="0.6" width="6.8" height="6.8" fill="none" stroke="#6f6f6f" stroke-width="1.2"/><path d="M1.8 4.2L3.3 5.8L6.4 2" fill="none" stroke="#6f6f6f" stroke-width="1.1"/></svg></span></div>
<div class="cell" style="left:429.5px;top:508.3px;width:39.5px;height:42.25px;"><span class="green" style="margin-left:3px">是</span></div>
<div class="cell" style="left:469px;top:508.3px;width:40.5px;height:42.25px;"><span class="green" style="margin-left:3px">是</span></div>
<div class="cell" style="left:509.5px;top:508.3px;width:53.0px;height:42.25px;"><span class="green">一般</span></div>
<div class="cell" style="left:562.5px;top:508.3px;width:71.0px;height:42.25px;"><span class="tag" style="background:#2d8cf0;color:#fff;width:30px;margin-left:-3.5px;margin-top:1px;font-weight:bold;font-size:9.8px">设置</span></div>
<div class="cell" style="left:633.5px;top:508.3px;width:88.5px;height:42.25px;"><span class="tag" style="background:#19be6b;color:#fff;width:50px;margin-left:-3px;font-weight:bold;font-size:9.8px"><svg width="8" height="8" viewBox="0 0 8 8" style="display:inline-block;vertical-align:-0.5px;margin-right:1.5px"><circle cx="4" cy="4" r="3.3" fill="none" stroke="#fff" stroke-width="1.1"/><rect x="3.45" y="2" width="1.1" height="4" fill="#fff"/></svg>运行中</span></div>
<div class="cell" style="left:722px;top:508.3px;width:88px;height:42.25px;"><span class="tag" style="border:1px solid #a3cdb5;color:#6b9f84;width:44.5px;margin-left:1px;font-size:10px">运行中</span></div>
<div class="cell" style="left:810px;top:508.3px;width:62.5px;height:42.25px;"><span style="color:#79a896;margin-left:-1px;margin-top:1px">上架</span></div>
<div class="cell" style="left:872.5px;top:508.3px;width:52.200000000000045px;height:42.25px;"><span style="color:#555;font-size:9.8px;margin-top:1px">4</span></div>
<div class="cell" style="left:924.7px;top:508.3px;width:114.59999999999991px;height:42.25px;"><span style="color:#aaa;position:absolute;top:14px;left:51.5px">无</span></div>
<div class="cell" style="left:173.2px;top:550.55px;width:48.80000000000001px;height:42.25px;"><span class="cb"></span><span style="position:absolute;left:30.5px;top:24px;width:1.5px;height:1.5px;background:#999"></span></div>
<div class="cell" style="left:222px;top:550.55px;width:44.5px;height:42.25px;"><span style="color:#555;font-size:9.8px;margin-top:1.5px">8</span></div>
<div class="cell" style="left:266.5px;top:550.55px;width:106.0px;height:42.25px;justify-content:flex-start;padding-left:16px;"><b style="font-size:9px;letter-spacing:0.55px;color:#444;margin-top:1.5px">BCH/BTC</b></div>
<div class="cell" style="left:372.5px;top:550.55px;width:57.0px;height:42.25px;"><span style="margin-top:2px;display:flex;align-items:center"><svg width="7.5" height="7.5" viewBox="0 0 8 8" style="display:inline-block"><rect x="0.6" y="0.6" width="6.8" height="6.8" fill="none" stroke="#6f6f6f" stroke-width="1.2"/><path d="M1.8 4.2L3.3 5.8L6.4 2" fill="none" stroke="#6f6f6f" stroke-width="1.1"/></svg><span style="display:inline-block;width:8px;text-align:center;font-size:9px;color:#888">/</span><svg width="7.5" height="7.5" viewBox="0 0 8 8" style="display:inline-block"><rect x="0.6" y="0.6" width="6.8" height="6.8" fill="none" stroke="#6f6f6f" stroke-width="1.2"/><path d="M1.8 4.2L3.3 5.8L6.4 2" fill="none" stroke="#6f6f6f" stroke-width="1.1"/></svg></span></div>
<div class="cell" style="left:429.5px;top:550.55px;width:39.5px;height:42.25px;"><span class="green" style="margin-left:3px">是</span></div>
<div class="cell" style="left:469px;top:550.55px;width:40.5px;height:42.25px;"><span class="green" style="margin-left:3px">是</span></div>
<div class="cell" style="left:509.5px;top:550.55px;width:53.0px;height:42.25px;"><span class="green">一般</span></div>
<div class="cell" style="left:562.5px;top:550.55px;width:71.0px;height:42.25px;"><span class="tag" style="background:#2d8cf0;color:#fff;width:30px;margin-left:-3.5px;margin-top:1px;font-weight:bold;font-size:9.8px">设置</span></div>
<div class="cell" style="left:633.5px;top:550.55px;width:88.5px;height:42.25px;"><span class="tag" style="background:#19be6b;color:#fff;width:50px;margin-left:-3px;font-weight:bold;font-size:9.8px"><svg width="8" height="8" viewBox="0 0 8 8" style="display:inline-block;vertical-align:-0.5px;margin-right:1.5px"><circle cx="4" cy="4" r="3.3" fill="none" stroke="#fff" stroke-width="1.1"/><rect x="3.45" y="2" width="1.1" height="4" fill="#fff"/></svg>运行中</span></div>
<div class="cell" style="left:722px;top:550.55px;width:88px;height:42.25px;"><span class="tag" style="border:1px solid #a3cdb5;color:#6b9f84;width:44.5px;margin-left:1px;font-size:10px">运行中</span></div>
<div class="cell" style="left:810px;top:550.55px;width:62.5px;height:42.25px;"><span style="color:#79a896;margin-left:-1px;margin-top:1px">上架</span></div>
<div class="cell" style="left:872.5px;top:550.55px;width:52.200000000000045px;height:42.25px;"><span style="color:#555;font-size:9.8px;margin-top:1px">5</span></div>
<div class="cell" style="left:924.7px;top:550.55px;width:114.59999999999991px;height:42.25px;"><span style="color:#aaa;position:absolute;top:14px;left:51.5px">无</span></div>
<div class="abs" style="left:975.9px;top:211.8px;width:7px;height:372.2px;background:linear-gradient(to right,rgba(0,0,0,0),rgba(0,0,0,0.05))"></div>
<div class="cell th" style="left:982.9px;top:211.8px;width:220.30000000000007px;height:43px;border-left:1px solid #e9ebee">操作</div>
<div class="cell" style="left:982.9px;top:254.8px;width:220.30000000000007px;height:42.25px;border-left:1px solid #e9ebee;justify-content:flex-start;background:#fff"><span class="tag abs" style="left:19.3px;top:11.7px;width:39.5px;background:#2db7f5;color:#fff;font-weight:bold;font-size:10px"><svg width="8" height="8" viewBox="0 0 8 8" style="display:inline-block;vertical-align:-0.5px;margin-right:2px"><g fill="#fff"><circle cx="4" cy="4" r="2.8"/><rect x="3.2" y="0" width="1.6" height="8"/><rect x="0" y="3.2" width="8" height="1.6"/><rect x="3.2" y="0" width="1.6" height="8" transform="rotate(45 4 4)"/><rect x="3.2" y="0" width="1.6" height="8" transform="rotate(-45 4 4)"/></g><circle cx="4" cy="4" r="1.1" fill="#2db7f5"/></svg>设置</span><span class="tag abs" style="left:64.3px;top:11.7px;width:59px;background:#e5461f;color:#fff;font-weight:bold;font-size:10px"><span style="display:inline-block;width:6.5px;height:6.5px;background:#fff;margin-right:2px;vertical-align:0px"></span>停止引擎</span><span class="tag abs" style="left:128.3px;top:11.7px;width:68px;background:#fa9c0c;color:#fff;font-size:9.6px">撤销所有委托</span></div>
<div class="cell" style="left:982.9px;top:297.05px;width:220.30000000000007px;height:42.25px;border-left:1px solid #e9ebee;justify-content:flex-start;background:#fff"><span class="tag abs" style="left:19.3px;top:11.7px;width:39.5px;background:#2db7f5;color:#fff;font-weight:bold;font-size:10px"><svg width="8" height="8" viewBox="0 0 8 8" style="display:inline-block;vertical-align:-0.5px;margin-right:2px"><g fill="#fff"><circle cx="4" cy="4" r="2.8"/><rect x="3.2" y="0" width="1.6" height="8"/><rect x="0" y="3.2" width="8" height="1.6"/><rect x="3.2" y="0" width="1.6" height="8" transform="rotate(45 4 4)"/><rect x="3.2" y="0" width="1.6" height="8" transform="rotate(-45 4 4)"/></g><circle cx="4" cy="4" r="1.1" fill="#2db7f5"/></svg>设置</span><span class="tag abs" style="left:64.3px;top:11.7px;width:59px;background:#e5461f;color:#fff;font-weight:bold;font-size:10px"><span style="display:inline-block;width:6.5px;height:6.5px;background:#fff;margin-right:2px;vertical-align:0px"></span>停止引擎</span><span class="tag abs" style="left:128.3px;top:11.7px;width:68px;background:#fa9c0c;color:#fff;font-size:9.6px">撤销所有委托</span></div>
<div class="cell" style="left:982.9px;top:339.3px;width:220.30000000000007px;height:42.25px;border-left:1px solid #e9ebee;justify-content:flex-start;background:#fff"><span class="tag abs" style="left:19.3px;top:11.7px;width:39.5px;background:#2db7f5;color:#fff;font-weight:bold;font-size:10px"><svg width="8" height="8" viewBox="0 0 8 8" style="display:inline-block;vertical-align:-0.5px;margin-right:2px"><g fill="#fff"><circle cx="4" cy="4" r="2.8"/><rect x="3.2" y="0" width="1.6" height="8"/><rect x="0" y="3.2" width="8" height="1.6"/><rect x="3.2" y="0" width="1.6" height="8" transform="rotate(45 4 4)"/><rect x="3.2" y="0" width="1.6" height="8" transform="rotate(-45 4 4)"/></g><circle cx="4" cy="4" r="1.1" fill="#2db7f5"/></svg>设置</span><span class="tag abs" style="left:64.3px;top:11.7px;width:59px;background:#e5461f;color:#fff;font-weight:bold;font-size:10px"><span style="display:inline-block;width:6.5px;height:6.5px;background:#fff;margin-right:2px;vertical-align:0px"></span>停止引擎</span><span class="tag abs" style="left:128.3px;top:11.7px;width:68px;background:#fa9c0c;color:#fff;font-size:9.6px">撤销所有委托</span></div>
<div class="cell" style="left:982.9px;top:381.55px;width:220.30000000000007px;height:42.25px;border-left:1px solid #e9ebee;justify-content:flex-start;background:#fff"><span class="tag abs" style="left:19.3px;top:11.7px;width:39.5px;background:#2db7f5;color:#fff;font-weight:bold;font-size:10px"><svg width="8" height="8" viewBox="0 0 8 8" style="display:inline-block;vertical-align:-0.5px;margin-right:2px"><g fill="#fff"><circle cx="4" cy="4" r="2.8"/><rect x="3.2" y="0" width="1.6" height="8"/><rect x="0" y="3.2" width="8" height="1.6"/><rect x="3.2" y="0" width="1.6" height="8" transform="rotate(45 4 4)"/><rect x="3.2" y="0" width="1.6" height="8" transform="rotate(-45 4 4)"/></g><circle cx="4" cy="4" r="1.1" fill="#2db7f5"/></svg>设置</span><span class="tag abs" style="left:64.3px;top:11.7px;width:59px;background:#e5461f;color:#fff;font-weight:bold;font-size:10px"><span style="display:inline-block;width:6.5px;height:6.5px;background:#fff;margin-right:2px;vertical-align:0px"></span>停止引擎</span><span class="tag abs" style="left:128.3px;top:11.7px;width:68px;background:#fa9c0c;color:#fff;font-size:9.6px">撤销所有委托</span></div>
<div class="cell" style="left:982.9px;top:423.8px;width:220.30000000000007px;height:42.25px;border-left:1px solid #e9ebee;justify-content:flex-start;background:#fff"><span class="tag abs" style="left:19.3px;top:11.7px;width:39.5px;background:#2db7f5;color:#fff;font-weight:bold;font-size:10px"><svg width="8" height="8" viewBox="0 0 8 8" style="display:inline-block;vertical-align:-0.5px;margin-right:2px"><g fill="#fff"><circle cx="4" cy="4" r="2.8"/><rect x="3.2" y="0" width="1.6" height="8"/><rect x="0" y="3.2" width="8" height="1.6"/><rect x="3.2" y="0" width="1.6" height="8" transform="rotate(45 4 4)"/><rect x="3.2" y="0" width="1.6" height="8" transform="rotate(-45 4 4)"/></g><circle cx="4" cy="4" r="1.1" fill="#2db7f5"/></svg>设置</span><span class="tag abs" style="left:64.3px;top:11.7px;width:59px;background:#e5461f;color:#fff;font-weight:bold;font-size:10px"><span style="display:inline-block;width:6.5px;height:6.5px;background:#fff;margin-right:2px;vertical-align:0px"></span>停止引擎</span><span class="tag abs" style="left:128.3px;top:11.7px;width:68px;background:#fa9c0c;color:#fff;font-size:9.6px">撤销所有委托</span></div>
<div class="cell" style="left:982.9px;top:466.05px;width:220.30000000000007px;height:42.25px;border-left:1px solid #e9ebee;justify-content:flex-start;background:#fff"><span class="tag abs" style="left:19.3px;top:11.7px;width:39.5px;background:#2db7f5;color:#fff;font-weight:bold;font-size:10px"><svg width="8" height="8" viewBox="0 0 8 8" style="display:inline-block;vertical-align:-0.5px;margin-right:2px"><g fill="#fff"><circle cx="4" cy="4" r="2.8"/><rect x="3.2" y="0" width="1.6" height="8"/><rect x="0" y="3.2" width="8" height="1.6"/><rect x="3.2" y="0" width="1.6" height="8" transform="rotate(45 4 4)"/><rect x="3.2" y="0" width="1.6" height="8" transform="rotate(-45 4 4)"/></g><circle cx="4" cy="4" r="1.1" fill="#2db7f5"/></svg>设置</span><span class="tag abs" style="left:64.3px;top:11.7px;width:59px;background:#e5461f;color:#fff;font-weight:bold;font-size:10px"><span style="display:inline-block;width:6.5px;height:6.5px;background:#fff;margin-right:2px;vertical-align:0px"></span>停止引擎</span><span class="tag abs" style="left:128.3px;top:11.7px;width:68px;background:#fa9c0c;color:#fff;font-size:9.6px">撤销所有委托</span></div>
<div class="cell" style="left:982.9px;top:508.3px;width:220.30000000000007px;height:42.25px;border-left:1px solid #e9ebee;justify-content:flex-start;background:#fff"><span class="tag abs" style="left:19.3px;top:11.7px;width:39.5px;background:#2db7f5;color:#fff;font-weight:bold;font-size:10px"><svg width="8" height="8" viewBox="0 0 8 8" style="display:inline-block;vertical-align:-0.5px;margin-right:2px"><g fill="#fff"><circle cx="4" cy="4" r="2.8"/><rect x="3.2" y="0" width="1.6" height="8"/><rect x="0" y="3.2" width="8" height="1.6"/><rect x="3.2" y="0" width="1.6" height="8" transform="rotate(45 4 4)"/><rect x="3.2" y="0" width="1.6" height="8" transform="rotate(-45 4 4)"/></g><circle cx="4" cy="4" r="1.1" fill="#2db7f5"/></svg>设置</span><span class="tag abs" style="left:64.3px;top:11.7px;width:59px;background:#e5461f;color:#fff;font-weight:bold;font-size:10px"><span style="display:inline-block;width:6.5px;height:6.5px;background:#fff;margin-right:2px;vertical-align:0px"></span>停止引擎</span><span class="tag abs" style="left:128.3px;top:11.7px;width:68px;background:#fa9c0c;color:#fff;font-size:9.6px">撤销所有委托</span></div>
<div class="cell" style="left:982.9px;top:550.55px;width:220.30000000000007px;height:42.25px;border-left:1px solid #e9ebee;justify-content:flex-start;background:#fff"><span class="tag abs" style="left:19.3px;top:11.7px;width:39.5px;background:#2db7f5;color:#fff;font-weight:bold;font-size:10px"><svg width="8" height="8" viewBox="0 0 8 8" style="display:inline-block;vertical-align:-0.5px;margin-right:2px"><g fill="#fff"><circle cx="4" cy="4" r="2.8"/><rect x="3.2" y="0" width="1.6" height="8"/><rect x="0" y="3.2" width="8" height="1.6"/><rect x="3.2" y="0" width="1.6" height="8" transform="rotate(45 4 4)"/><rect x="3.2" y="0" width="1.6" height="8" transform="rotate(-45 4 4)"/></g><circle cx="4" cy="4" r="1.1" fill="#2db7f5"/></svg>设置</span><span class="tag abs" style="left:64.3px;top:11.7px;width:59px;background:#e5461f;color:#fff;font-weight:bold;font-size:10px"><span style="display:inline-block;width:6.5px;height:6.5px;background:#fff;margin-right:2px;vertical-align:0px"></span>停止引擎</span><span class="tag abs" style="left:128.3px;top:11.7px;width:68px;background:#fa9c0c;color:#fff;font-size:9.6px">撤销所有委托</span></div>
<div class="abs" style="left:1218.5px;top:90px;width:10px;height:494px;background:linear-gradient(to right,#e6e9eb,#f1f4f5 2px,#f1f4f5)"></div>
</body></html>
